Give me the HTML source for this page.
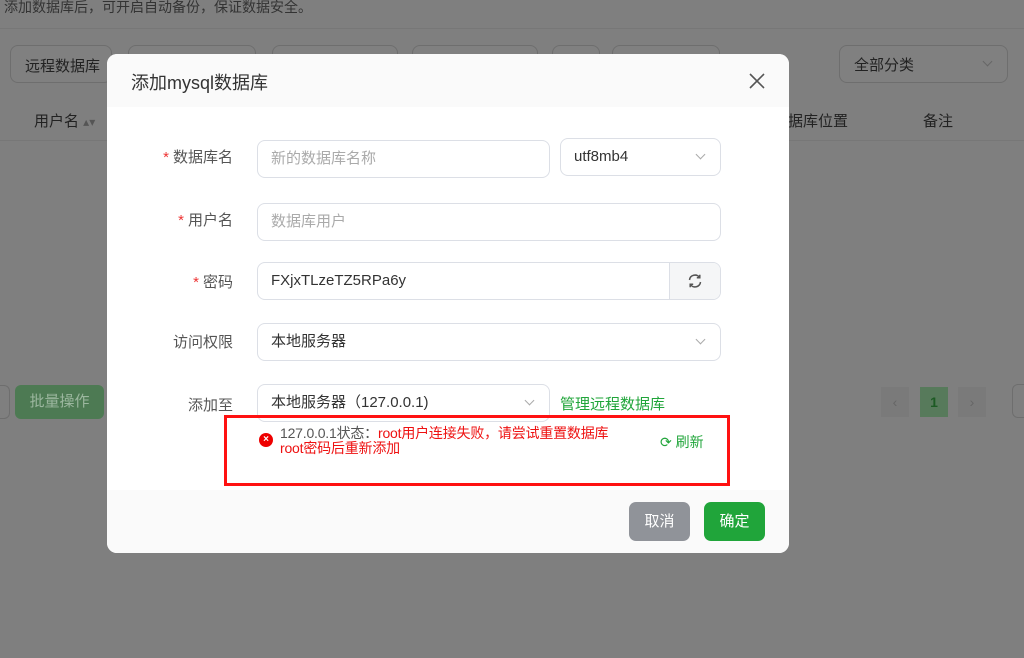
<!DOCTYPE html>
<html><head><meta charset="utf-8"><style>
*{box-sizing:border-box;margin:0;padding:0}
body{width:1024px;height:658px;overflow:hidden;background:#7f7f7f;font-family:"Liberation Sans","Noto Sans CJK SC",sans-serif;font-size:14px;color:#333;position:relative}
.a{position:absolute}
.bgbtn{position:absolute;border:1px solid #6e6e6e;border-radius:8px;background:#808080;height:38px;top:45px}
.modal{position:absolute;left:107px;top:54px;width:682px;height:499px;background:#fff;border-radius:10px;overflow:hidden}
.hd{position:absolute;left:0;top:0;width:100%;height:53px;background:#fafafa}
.ft{position:absolute;left:0;top:436px;width:100%;height:63px;background:#fafafa}
.lbl{position:absolute;width:126px;text-align:right;font-size:15px;color:#555}
.lbl b{color:#e33;font-weight:normal;margin-right:4px}
.inp{position:absolute;border:1px solid #dcdfe6;border-radius:8px;height:38px;background:#fff;padding-left:13px;line-height:36px;font-size:15px;color:#333}
.ph{color:#aaa}
.chev{position:absolute;right:16px;top:12px;width:7px;height:7px;border-right:1px solid #aaa;border-bottom:1px solid #aaa;transform:rotate(45deg)}
</style></head><body>
<div class="a" style="left:4px;top:-3px;font-size:14px;color:#333">添加数据库后，可开启自动备份，保证数据安全。</div>
<div class="a" style="left:0;top:28px;width:1024px;height:1px;background:#777"></div>
<div class="bgbtn" style="left:10px;width:102px;"><span class="a" style="left:14px;top:9px;color:#222;font-size:15px">远程数据库</span></div>
<div class="bgbtn" style="left:128px;width:128px"></div>
<div class="bgbtn" style="left:272px;width:126px"></div>
<div class="bgbtn" style="left:412px;width:126px"></div>
<div class="bgbtn" style="left:552px;width:48px"></div>
<div class="bgbtn" style="left:612px;width:108px"></div>
<div class="bgbtn" style="left:839px;width:169px"><span class="a" style="left:14px;top:8px;color:#222;font-size:15px">全部分类</span><span class="chev" style="border-color:#666"></span></div>
<div class="a" style="left:34px;top:110px;color:#222;font-size:15px">用户名 <span style="color:#555;font-size:12px">▴▾</span></div>
<div class="a" style="left:788px;top:110px;color:#222;font-size:15px">据库位置</div>
<div class="a" style="left:923px;top:110px;color:#222;font-size:15px">备注</div>
<div class="a" style="left:0;top:140px;width:1024px;height:1px;background:#777"></div>
<div class="a" style="left:0;top:385px;width:10px;height:34px;border:1px solid #6e6e6e;border-left:none;border-radius:0 6px 6px 0"></div>
<div class="a" style="left:15px;top:385px;width:89px;height:34px;background:#4d7a53;border-radius:6px;color:#9cb79f;line-height:34px;text-align:center;font-size:15px">批量操作</div>
<div class="a" style="left:881px;top:387px;width:28px;height:30px;background:#7a7a7a;color:#666;text-align:center;line-height:30px">‹</div>
<div class="a" style="left:920px;top:387px;width:28px;height:30px;background:#577a5b;color:#1d5b24;text-align:center;line-height:30px;font-weight:bold">1</div>
<div class="a" style="left:958px;top:387px;width:28px;height:30px;background:#7a7a7a;color:#666;text-align:center;line-height:30px">›</div>
<div class="a" style="left:1012px;top:384px;width:20px;height:34px;border:1px solid #6e6e6e;border-radius:6px"></div>

<div class="modal">
 <div class="hd"><span class="a" style="left:24px;top:15px;font-size:18px;color:#333">添加mysql数据库</span>
 <svg class="a" style="left:642px;top:19px" width="16" height="16" viewBox="0 0 16 16"><path d="M1 1L15 15M15 1L1 15" stroke="#555" stroke-width="1.6"/></svg></div>
 <div class="lbl" style="left:0;top:92px"><b>*</b>数据库名</div>
 <div class="inp ph" style="left:150px;top:86px;width:293px">新的数据库名称</div>
 <div class="inp" style="left:453px;top:84px;width:161px">utf8mb4<span class="chev"></span></div>
 <div class="lbl" style="left:0;top:155px"><b>*</b>用户名</div>
 <div class="inp ph" style="left:150px;top:149px;width:464px">数据库用户</div>
 <div class="lbl" style="left:0;top:217px"><b>*</b>密码</div>
 <div class="inp" style="left:150px;top:208px;width:464px;overflow:hidden">FXjxTLzeTZ5RPa6y
  <div class="a" style="right:0;top:0;width:51px;height:36px;background:#f5f6f7;border-left:1px solid #dcdfe6">
  <svg class="a" style="left:17px;top:10px" width="16" height="16" viewBox="0 0 16 16" fill="none" stroke="#555" stroke-width="1.5"><path d="M2.5 7A5.5 5.5 0 0 1 12.5 4.5M13.5 9A5.5 5.5 0 0 1 3.5 11.5"/><path d="M12.8 1.8V4.8H9.8M3.2 14.2V11.2H6.2"/></svg></div></div>
 <div class="lbl" style="left:0;top:277px">访问权限</div>
 <div class="inp" style="left:150px;top:269px;width:464px">本地服务器<span class="chev"></span></div>
 <div class="lbl" style="left:0;top:340px">添加至</div>
 <div class="inp" style="left:150px;top:330px;width:293px">本地服务器（127.0.0.1)<span class="chev"></span></div>
 <div class="a" style="left:453px;top:339px;color:#20a53a;font-size:15px">管理远程数据库</div>
 <div class="ft"></div>
 <div class="a" style="left:117px;top:361px;width:506px;height:71px;border:3px solid #f11"></div>
 <div class="a" style="left:152px;top:379px;width:14px;height:14px;border-radius:50%;background:#e00;color:#fff;font-size:10px;line-height:14px;text-align:center;font-weight:bold">×</div>
 <div class="a" style="left:173px;top:372px;font-size:14px;line-height:15px;color:#e11;width:380px;letter-spacing:-0.2px"><span style="color:#555">127.0.0.1状态：</span>root用户连接失败，请尝试重置数据库<br>root密码后重新添加</div>
 <div class="a" style="left:553px;top:378px;color:#20a53a;font-size:14px">⟳ 刷新</div>
 <div class="a" style="left:522px;top:448px;width:61px;height:39px;background:#909399;border-radius:7px;color:#fff;line-height:39px;text-align:center;font-size:15px">取消</div>
 <div class="a" style="left:597px;top:448px;width:61px;height:39px;background:#20a53a;border-radius:7px;color:#fff;line-height:39px;text-align:center;font-size:15px">确定</div>
</div>
</body></html>
